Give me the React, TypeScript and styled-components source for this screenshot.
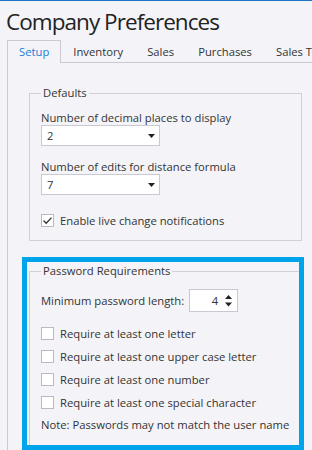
import React from "react";
import styled, { createGlobalStyle, css } from "styled-components";

const GlobalStyle = createGlobalStyle`
  html, body { margin: 0; padding: 0; background: #f4f4f8; overflow: hidden; }
  body { font-family: "Open Sans", "Noto Sans", sans-serif; color: #333; font-size: 11.25px; }
`;

const Window = styled.div`
  border-top: 1px solid #1e74c4;
  width: 312px;
  height: 449px;
  overflow: hidden;
`;

const Title = styled.h1`
  margin: 5px 0 2px 6px;
  font-size: 22.5px;
  font-weight: 400;
  letter-spacing: -0.95px;
  line-height: 32px;
  color: #222;
  white-space: nowrap;
`;

const TabBar = styled.div`
  display: flex;
  margin-left: 7px;
  height: 22px;
  border-bottom: 1px solid #c9cad3;
  white-space: nowrap;
`;

const Tab = styled.div<{ $active?: boolean }>`
  box-sizing: border-box;
  height: 23px;
  padding: 1px 11px 1px;
  line-height: 20px;
  border: 1px solid transparent;
  border-bottom: none;
  color: #333;
  ${(p) =>
    p.$active &&
    css`
      border-color: #c9cad3;
      background: #f4f4f8;
      color: #1a7cd8;
    `}
`;

const Panel = styled.div`
  margin-left: 7px;
  border-left: 1px solid #c9cad3;
  padding: 22px 0 40px 21px;
`;

const Group = styled.fieldset`
  margin: 0;
  min-width: 0;
  width: 273px;
  box-sizing: border-box;
  border: 1px solid #cfd0d8;
  padding: 10px 11px 12px 11px;
`;

const Legend = styled.legend`
  padding: 0 2px;
  line-height: 16px;
`;

const Stack = styled.div<{ $gap: number }>`
  display: flex;
  flex-direction: column;
  gap: ${(p) => p.$gap}px;
`;

const Field = styled.div`
  display: flex;
  flex-direction: column;
`;

const Label = styled.span`
  line-height: 14px;
`;

const Select = styled.div`
  box-sizing: border-box;
  width: 119px;
  height: 21px;
  display: flex;
  align-items: center;
  justify-content: space-between;
  padding: 0 4px 0 5px;
  background: #fff;
  border: 1px solid #c8c9d1;
`;

const CheckRow = styled.label`
  display: flex;
  align-items: center;
  height: 16px;
  gap: 6px;
`;

const Box = styled.span`
  box-sizing: border-box;
  width: 13px;
  height: 13px;
  background: #fff;
  border: 1px solid #b9bac3;
  display: flex;
  align-items: center;
  justify-content: center;
`;

const HighlightWrap = styled.div`
  position: relative;
  margin-top: 22px;
  width: 273px;
`;

const Highlight = styled.div`
  position: absolute;
  top: -6px;
  left: -7px;
  right: -2px;
  bottom: -4px;
  border: 5px solid #00a4ea;
  pointer-events: none;
`;

const SpinRow = styled.div`
  display: flex;
  align-items: center;
  gap: 5px;
  height: 23px;
`;

const Spin = styled.div`
  box-sizing: border-box;
  width: 49px;
  height: 23px;
  display: flex;
  align-items: center;
  background: #fff;
  border: 1px solid #c8c9d1;
  padding-right: 5px;
`;

const SpinValue = styled.span`
  flex: 1;
  text-align: right;
  padding-right: 7px;
`;

const Note = styled.div`
  line-height: 16px;
`;

const Caret = () => (
  <svg width="7" height="4" viewBox="0 0 7 4">
    <path d="M0 0 H7 L3.5 4 Z" fill="#222" />
  </svg>
);

const Check = ({ checked }: { checked?: boolean }) => (
  <Box>
    {checked && (
      <svg width="11" height="11" viewBox="0 0 11 11">
        <path d="M1.5 5.5 L4.2 8.2 L9.5 2.6" fill="none" stroke="#333" strokeWidth="1.3" />
      </svg>
    )}
  </Box>
);

const SpinArrows = () => (
  <svg width="7" height="13" viewBox="0 0 7 13">
    <path d="M0 5 L3.5 1 L7 5 Z" fill="#222" />
    <path d="M0 8.5 H7 L3.5 12.5 Z" fill="#222" />
  </svg>
);

const requirements = [
  "Require at least one letter",
  "Require at least one upper case letter",
  "Require at least one number",
  "Require at least one special character",
];

export default function App() {
  return (
    <Window>
      <GlobalStyle />
      <Title>Company Preferences</Title>
      <TabBar>
        <Tab $active>Setup</Tab>
        <Tab>Inventory</Tab>
        <Tab>Sales</Tab>
        <Tab>Purchases</Tab>
        <Tab>Sales Tax</Tab>
        <Tab>Payroll</Tab>
      </TabBar>
      <Panel>
        <Group>
          <Legend>Defaults</Legend>
          <Stack $gap={14}>
            <Field>
              <Label>Number of decimal places to display</Label>
              <Select>
                <span>2</span>
                <Caret />
              </Select>
            </Field>
            <Field>
              <Label>Number of edits for distance formula</Label>
              <Select>
                <span>7</span>
                <Caret />
              </Select>
            </Field>
            <CheckRow style={{ marginTop: 3 }}>
              <Check checked />
              <span>Enable live change notifications</span>
            </CheckRow>
          </Stack>
        </Group>
        <HighlightWrap>
          <Group>
            <Legend>Password Requirements</Legend>
            <SpinRow style={{ marginBottom: 13 }}>
              <span>Minimum password length:</span>
              <Spin>
                <SpinValue>4</SpinValue>
                <SpinArrows />
              </Spin>
            </SpinRow>
            <Stack $gap={7}>
              {requirements.map((r) => (
                <CheckRow key={r}>
                  <Check />
                  <span>{r}</span>
                </CheckRow>
              ))}
              <Note>Note: Passwords may not match the user name</Note>
            </Stack>
          </Group>
          <Highlight />
        </HighlightWrap>
      </Panel>
    </Window>
  );
}
